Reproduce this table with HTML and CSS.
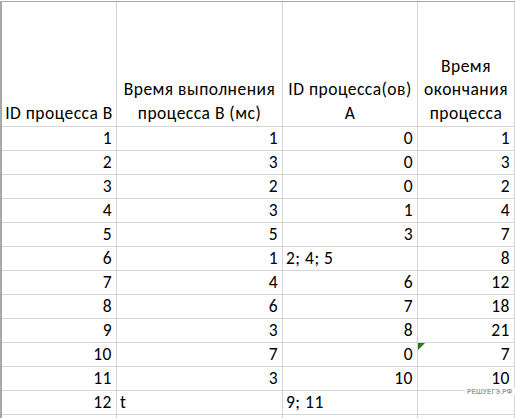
FILE: index.html
```html
<!DOCTYPE html>
<html lang="ru">
<head>
<meta charset="utf-8">
<title>Таблица</title>
<link rel="stylesheet" href="styles.css">
</head>
<body>
<div class="sheet">
  <div class="grid">
    <div class="c h"><span>ID процесса B</span></div>
    <div class="c h"><span>Время выполнения<br>процесса B (мс)</span></div>
    <div class="c h"><span>ID процесса(ов)<br>A</span></div>
    <div class="c h"><span>Время<br>окончания<br>процесса</span></div>
    <div class="c e"></div>

    <div class="c n">1</div><div class="c n">1</div><div class="c n">0</div><div class="c n">1</div><div class="c e"></div>
    <div class="c n">2</div><div class="c n">3</div><div class="c n">0</div><div class="c n">3</div><div class="c e"></div>
    <div class="c n">3</div><div class="c n">2</div><div class="c n">0</div><div class="c n">2</div><div class="c e"></div>
    <div class="c n">4</div><div class="c n">3</div><div class="c n">1</div><div class="c n">4</div><div class="c e"></div>
    <div class="c n">5</div><div class="c n">5</div><div class="c n">3</div><div class="c n">7</div><div class="c e"></div>
    <div class="c n">6</div><div class="c n">1</div><div class="c t">2; 4; 5</div><div class="c n">8</div><div class="c e"></div>
    <div class="c n">7</div><div class="c n">4</div><div class="c n">6</div><div class="c n">12</div><div class="c e"></div>
    <div class="c n">8</div><div class="c n">6</div><div class="c n">7</div><div class="c n">18</div><div class="c e"></div>
    <div class="c n">9</div><div class="c n">3</div><div class="c n">8</div><div class="c n">21</div><div class="c e"></div>
    <div class="c n">10</div><div class="c n">7</div><div class="c n">0</div><div class="c n flag">7</div><div class="c e"></div>
    <div class="c n">11</div><div class="c n">3</div><div class="c n">10</div><div class="c n">10</div><div class="c e"></div>
    <div class="c n">12</div><div class="c t">t</div><div class="c t">9; 11</div><div class="c n"></div><div class="c e"></div>
    <div class="c n"></div><div class="c n"></div><div class="c n"></div><div class="c n"></div><div class="c e"></div>
  </div>
  <div class="mark">РЕШУЕГЭ.РФ</div>
</div>
</body>
</html>
```

FILE: styles.css
```css
html, body {
  margin: 0;
  padding: 0;
  background: #ffffff;
  overflow: hidden;
}

.sheet {
  position: relative;
  width: 515px;
  height: 418px;
  overflow: hidden;
  padding-top: 1px;
  box-sizing: border-box;
  font-family: Carlito, Lato, "Liberation Sans", sans-serif;
  font-size: 17.5px;
  letter-spacing: 0.5px;
  color: #000;
}

.grid {
  display: grid;
  grid-template-columns: 115px 166px 135px 97px 1fr;
  grid-template-rows: 125px repeat(13, 24px);
  border-top: 1px solid #a8a8a8;
  border-left: 2px solid #a8a8a8;
}

.c {
  border-right: 1px solid #d4d4d4;
  border-bottom: 1px solid #d4d4d4;
  display: flex;
  align-items: flex-end;
  white-space: nowrap;
  line-height: 23px;
  overflow: hidden;
}

.c.e {
  border-right: none;
}

.h {
  justify-content: center;
  text-align: center;
  line-height: 23.5px;
  padding-bottom: 1px;
}

.n {
  justify-content: flex-end;
  padding-right: 4px;
}

.t {
  justify-content: flex-start;
  padding-left: 3px;
}

.flag {
  position: relative;
}

.flag::before {
  content: "";
  position: absolute;
  left: 0;
  top: 0;
  border-top: 7px solid #1e7b1e;
  border-right: 7px solid transparent;
}

.mark {
  position: absolute;
  left: 465px;
  top: 388px;
  padding: 0 2px;
  background: #ffffff;
  color: #9c9c9c;
  font-family: "Liberation Sans", sans-serif;
  font-weight: bold;
  font-size: 6.5px;
  letter-spacing: 0.2px;
  line-height: 7px;
  white-space: nowrap;
}
```
